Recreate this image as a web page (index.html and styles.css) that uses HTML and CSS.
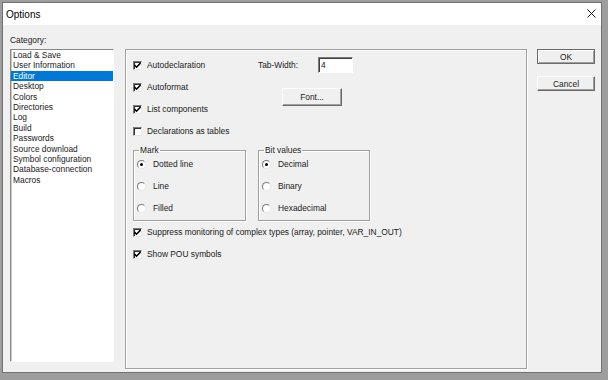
FILE: index.html
```html
<!DOCTYPE html>
<html lang="en">
<head>
    <meta charset="UTF-8">
    <meta name="viewport" content="width=device-width, initial-scale=1.0">
    <title>Options</title>
    <link rel="stylesheet" href="styles.css">
</head>
<body>
    <div class="window">
        <div class="titlebar">
            <span class="title">Options</span>
            <svg class="close" width="9" height="9" viewBox="0 0 9 9">
                <path d="M0.5 0.5 L8.5 8.5 M8.5 0.5 L0.5 8.5" stroke="#1a1a1a" stroke-width="1" fill="none"/>
            </svg>
        </div>
        <div class="content">
            <div class="cat-label">Category:</div>
            <ul class="listbox">
                <li>Load &amp; Save</li>
                <li>User Information</li>
                <li class="selected">Editor</li>
                <li>Desktop</li>
                <li>Colors</li>
                <li>Directories</li>
                <li>Log</li>
                <li>Build</li>
                <li>Passwords</li>
                <li>Source download</li>
                <li>Symbol configuration</li>
                <li>Database-connection</li>
                <li>Macros</li>
            </ul>

            <div class="panel">
                <div class="top">
                    <div class="checks">
                        <label class="opt"><span class="check"><svg width="7" height="7" viewBox="0 0 7 7"><path d="M0.5 3 L2.5 5.2 L6.5 1" stroke="#000" stroke-width="1.6" fill="none"/></svg></span>Autodeclaration</label>
                        <label class="opt"><span class="check"><svg width="7" height="7" viewBox="0 0 7 7"><path d="M0.5 3 L2.5 5.2 L6.5 1" stroke="#000" stroke-width="1.6" fill="none"/></svg></span>Autoformat</label>
                        <label class="opt"><span class="check"><svg width="7" height="7" viewBox="0 0 7 7"><path d="M0.5 3 L2.5 5.2 L6.5 1" stroke="#000" stroke-width="1.6" fill="none"/></svg></span>List components</label>
                        <label class="opt"><span class="check"></span>Declarations as tables</label>
                    </div>
                    <div class="side">
                        <div class="tabrow">
                            <span class="tablabel">Tab-Width:</span>
                            <span class="field">4</span>
                        </div>
                        <button class="btn font-btn">Font...</button>
                    </div>
                </div>

                <div class="groups">
                    <fieldset class="group">
                        <legend>Mark</legend>
                        <label class="radio-opt"><span class="radio on"></span>Dotted line</label>
                        <label class="radio-opt"><span class="radio"></span>Line</label>
                        <label class="radio-opt"><span class="radio"></span>Filled</label>
                    </fieldset>
                    <fieldset class="group">
                        <legend>Bit values</legend>
                        <label class="radio-opt"><span class="radio on"></span>Decimal</label>
                        <label class="radio-opt"><span class="radio"></span>Binary</label>
                        <label class="radio-opt"><span class="radio"></span>Hexadecimal</label>
                    </fieldset>
                </div>

                <label class="opt"><span class="check"><svg width="7" height="7" viewBox="0 0 7 7"><path d="M0.5 3 L2.5 5.2 L6.5 1" stroke="#000" stroke-width="1.6" fill="none"/></svg></span>Suppress monitoring of complex types (array, pointer, VAR_IN_OUT)</label>
                <label class="opt"><span class="check"><svg width="7" height="7" viewBox="0 0 7 7"><path d="M0.5 3 L2.5 5.2 L6.5 1" stroke="#000" stroke-width="1.6" fill="none"/></svg></span>Show POU symbols</label>
            </div>

            <div class="buttons">
                <button class="btn default">OK</button>
                <button class="btn">Cancel</button>
            </div>
        </div>
    </div>
</body>
</html>
```

FILE: styles.css
```css
body {
    margin: 0;
    padding: 2px 0 0 2px;
    background-color: #9d9d9d;
    font-family: "Liberation Sans", Arial, sans-serif;
    font-size: 8.4px;
    color: #1a1a1a;
}
.window {
    width: 598px;
    height: 369px;
    border: 1px solid #717171;
    background-color: #f0f0f0;
}
.titlebar {
    height: 22px;
    background-color: #fff;
    display: flex;
    align-items: center;
    justify-content: space-between;
    padding: 0 5px 0 3px;
}
.title {
    font-size: 10px;
    color: #000;
}
.close {
    display: block;
    margin-top: -2px;
}
.content {
    display: grid;
    grid-template-columns: 115px 412px 1fr;
    grid-template-rows: 14px auto;
    padding: 10px 0 0 7px;
}
.cat-label {
    grid-column: 1 / 2;
    line-height: 11px;
}
.listbox {
    grid-column: 1;
    grid-row: 2;
    list-style: none;
    margin: 0;
    padding: 0;
    width: 102px;
    height: 311px;
    background-color: #fff;
    border: 1px solid;
    border-color: #8a8a8a #fff #fff #8a8a8a;
    box-shadow: inset 1px 0 0 #c8c8c8;
}
.listbox li {
    line-height: 10.4px;
    height: 10.4px;
    padding-left: 2px;
    white-space: nowrap;
}
.listbox li.selected {
    background-color: #0078d7;
    color: #fff;
}
.panel {
    grid-column: 2;
    grid-row: 2;
    border: 1px solid #a0a0a0;
    box-shadow: inset 1px 1px 0 #fff, 1px 1px 0 #fff;
    padding: 4px 0 0 7px;
    width: 393px;
    height: 314px;
}
.top {
    display: grid;
    grid-template-columns: 125px auto;
}
.opt {
    display: flex;
    align-items: center;
    height: 22px;
    white-space: nowrap;
}
.check {
    width: 7px;
    height: 7px;
    border: 1px solid;
    border-color: #7a7a7a #e8e8e8 #e8e8e8 #7a7a7a;
    box-shadow: inset 1px 1px 0 #333;
    background-color: #fff;
    margin-right: 5px;
    display: flex;
    align-items: center;
    justify-content: center;
}
.check svg {
    display: block;
}
.tabrow {
    display: flex;
    align-items: center;
    height: 22px;
}
.tablabel {
    width: 60px;
}
.field {
    width: 31px;
    height: 14px;
    line-height: 14px;
    padding-left: 2px;
    background-color: #fff;
    border: 1px solid;
    border-color: #7a7a7a #fff #fff #7a7a7a;
    box-shadow: inset 1px 1px 0 #404040;
}
.btn {
    font-family: "Liberation Sans", Arial, sans-serif;
    font-size: 8.4px;
    color: #1a1a1a;
    background-color: #f0f0f0;
    border: 1px solid;
    border-color: #fff #6a6a6a #6a6a6a #fff;
    box-shadow: inset -1px -1px 0 #a0a0a0;
    padding: 0;
    cursor: pointer;
}
.font-btn {
    display: block;
    width: 60px;
    height: 18px;
    margin: 12px 0 0 24px;
}
.groups {
    display: flex;
    gap: 12px;
    margin-top: 5px;
}
.group {
    margin: 0;
    padding: 0 0 1px 3px;
    border: 1px solid #a0a0a0;
    box-shadow: inset 1px 1px 0 #fff, 1px 1px 0 #fff;
    box-sizing: border-box;
    width: 113px;
}
.group + .group {
    width: 112px;
}
.group legend {
    line-height: 6px;
    padding: 0 1px;
    margin-left: 2px;
}
.radio-opt {
    display: flex;
    align-items: center;
    height: 22px;
}
.radio {
    width: 7px;
    height: 7px;
    border-radius: 50%;
    border: 1px solid;
    border-color: #7a7a7a #e8e8e8 #e8e8e8 #7a7a7a;
    background-color: #fff;
    margin-right: 7px;
    display: flex;
    align-items: center;
    justify-content: center;
}
.radio.on::after {
    content: "";
    width: 3px;
    height: 3px;
    border-radius: 50%;
    background-color: #000;
}
.buttons {
    grid-column: 3;
    grid-row: 2;
    display: flex;
    flex-direction: column;
    gap: 12px;
}
.buttons .btn {
    width: 58px;
    height: 15px;
}
.btn.default {
    border-color: #6a6a6a;
    box-shadow: inset 1px 1px 0 #fff, inset -1px -1px 0 #a0a0a0;
}
```
